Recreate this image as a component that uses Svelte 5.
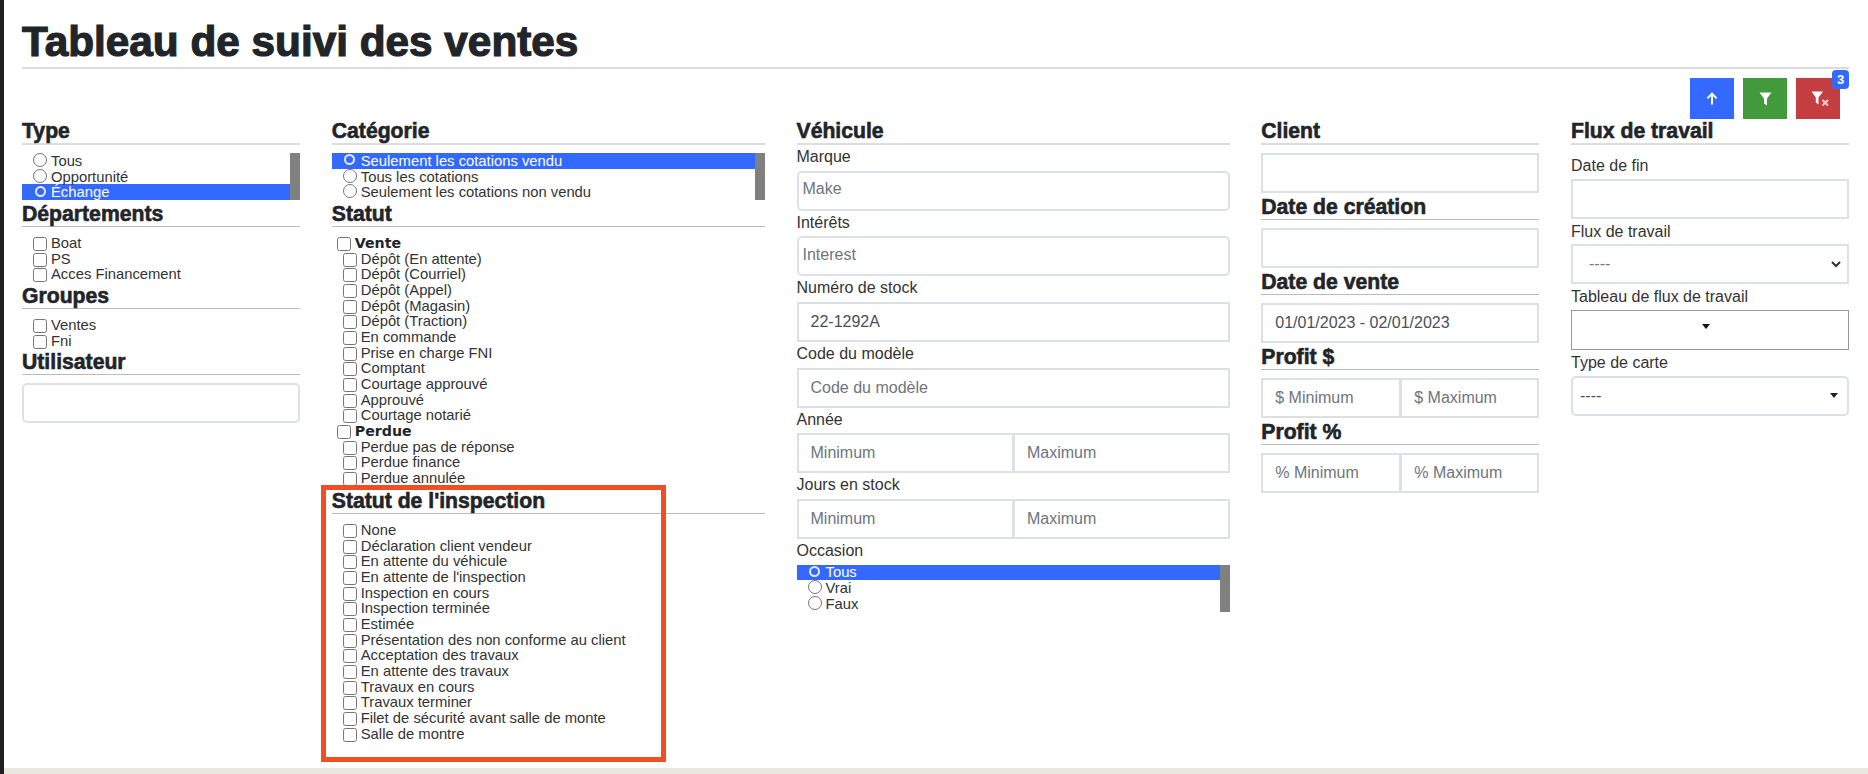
<script>
  const typeOptions = [
    { label: 'Tous' },
    { label: 'Opportunité' },
    { label: 'Échange', selected: true }
  ];
  const categoryOptions = [
    { label: 'Seulement les cotations vendu', selected: true },
    { label: 'Tous les cotations' },
    { label: 'Seulement les cotations non vendu' }
  ];
  const usedOptions = [
    { label: 'Tous', selected: true },
    { label: 'Vrai' },
    { label: 'Faux' }
  ];
  const departments = ['Boat', 'PS', 'Acces Financement'];
  const groups = ['Ventes', 'Fni'];
  const statusGroups = [
    {
      name: 'Vente',
      items: [
        'Dépôt (En attente)',
        'Dépôt (Courriel)',
        'Dépôt (Appel)',
        'Dépôt (Magasin)',
        'Dépôt (Traction)',
        'En commande',
        'Prise en charge FNI',
        'Comptant',
        'Courtage approuvé',
        'Approuvé',
        'Courtage notarié'
      ]
    },
    { name: 'Perdue', items: ['Perdue pas de réponse', 'Perdue finance', 'Perdue annulée'] }
  ];
  const inspection = [
    'None',
    'Déclaration client vendeur',
    'En attente du véhicule',
    "En attente de l'inspection",
    'Inspection en cours',
    'Inspection terminée',
    'Estimée',
    'Présentation des non conforme au client',
    'Acceptation des travaux',
    'En attente des travaux',
    'Travaux en cours',
    'Travaux terminer',
    'Filet de sécurité avant salle de monte',
    'Salle de montre'
  ];
</script>

{#snippet radioList(name, options)}
  <div class="radio-list">
    <div class="options">
      {#each options as opt}
        <label class="option" class:selected={opt.selected}>
          <input type="radio" {name} />
          <span>{opt.label}</span>
        </label>
      {/each}
    </div>
    <div class="thumb"></div>
  </div>
{/snippet}

{#snippet checks(items)}
  <div class="checks">
    {#each items as item}
      <label class="check"><input type="checkbox" /><span>{item}</span></label>
    {/each}
  </div>
{/snippet}

<div class="page">
  <div class="edge"></div>
  <div class="main">
    <main class="content">
      <h1>Tableau de suivi des ventes</h1>

      <div class="actions">
        <button class="btn blue" aria-label="Haut">
          <svg width="12" height="13" viewBox="0 0 12 13"><path d="M6 12.5V2M1.4 6.4 6 1.6l4.6 4.8" fill="none" stroke="#fff" stroke-width="2" /></svg>
        </button>
        <button class="btn green" aria-label="Filtrer">
          <svg width="13" height="14" viewBox="0 0 13 14"><path d="M0.5 0.5h12L8 6.5V13.5L5 11.5V6.5z" fill="#fff" /></svg>
        </button>
        <button class="btn red" aria-label="Effacer">
          <svg width="19" height="15" viewBox="0 0 19 15"><path d="M0.5 0.5h11.5L7.5 6.5V13.5L4.8 11.5V6.5z" fill="#fff" /><path d="M11.5 9l5.5 5.5M17 9l-5.5 5.5" stroke="#f3c9cb" stroke-width="2" /></svg>
          <span class="badge">3</span>
        </button>
      </div>

      <div class="grid">
        <section>
          <h5 class="top">Type</h5>
          {@render radioList('type', typeOptions)}
          <h5>Départements</h5>
          {@render checks(departments)}
          <h5>Groupes</h5>
          {@render checks(groups)}
          <h5>Utilisateur</h5>
          <input class="field round" type="text" />
        </section>

        <section>
          <h5 class="top">Catégorie</h5>
          {@render radioList('category', categoryOptions)}
          <h5>Statut</h5>
          <div class="checks status">
            {#each statusGroups as group}
              <label class="check parent"><input type="checkbox" /><span>{group.name}</span></label>
              {#each group.items as item}
                <label class="check"><input type="checkbox" /><span>{item}</span></label>
              {/each}
            {/each}
          </div>
          <div class="highlight-wrap">
            <h5>Statut de l'inspection</h5>
            {@render checks(inspection)}
            <div class="highlight"></div>
          </div>
        </section>

        <section class="tight">
          <h5 class="top">Véhicule</h5>
          <span class="label">Marque</span>
          <input class="field round small-pad" type="text" placeholder="Make" />
          <span class="label">Intérêts</span>
          <input class="field round small-pad" type="text" placeholder="Interest" />
          <span class="label">Numéro de stock</span>
          <input class="field" type="text" value="22-1292A" />
          <span class="label">Code du modèle</span>
          <input class="field" type="text" placeholder="Code du modèle" />
          <span class="label">Année</span>
          <div class="pair">
            <input class="field" type="text" placeholder="Minimum" />
            <input class="field" type="text" placeholder="Maximum" />
          </div>
          <span class="label">Jours en stock</span>
          <div class="pair">
            <input class="field" type="text" placeholder="Minimum" />
            <input class="field" type="text" placeholder="Maximum" />
          </div>
          <span class="label">Occasion</span>
          {@render radioList('used', usedOptions)}
        </section>

        <section>
          <h5 class="top">Client</h5>
          <input class="field" type="text" />
          <h5>Date de création</h5>
          <input class="field" type="text" />
          <h5>Date de vente</h5>
          <input class="field" type="text" value="01/01/2023 - 02/01/2023" />
          <h5>Profit $</h5>
          <div class="pair">
            <input class="field" type="text" placeholder="$ Minimum" />
            <input class="field" type="text" placeholder="$ Maximum" />
          </div>
          <h5>Profit %</h5>
          <div class="pair">
            <input class="field" type="text" placeholder="% Minimum" />
            <input class="field" type="text" placeholder="% Maximum" />
          </div>
        </section>

        <section class="workflow">
          <h5 class="top">Flux de travail</h5>
          <span class="label">Date de fin</span>
          <input class="field" type="text" />
          <span class="label">Flux de travail</span>
          <div class="field box wf">
            <span class="dashes">----</span>
            <svg width="10" height="7" viewBox="0 0 10 7"><path d="M1 1l4 4 4-4" fill="none" stroke="#333" stroke-width="2" /></svg>
          </div>
          <span class="label">Tableau de flux de travail</span>
          <div class="field box board">
            <svg width="8" height="5" viewBox="0 0 8 5"><path d="M0 0h8L4 5z" fill="#111" /></svg>
          </div>
          <span class="label">Type de carte</span>
          <div class="field box round card">
            <span class="dashes">----</span>
            <svg width="8" height="5" viewBox="0 0 8 5"><path d="M0 0h8L4 5z" fill="#222" /></svg>
          </div>
        </section>
      </div>
    </main>
    <div class="footer"></div>
  </div>
</div>

<style>
  :global(body) {
    margin: 0;
    background: #fff;
    font-family: 'Liberation Sans', Arial, sans-serif;
    color: #333;
  }

  .page {
    display: flex;
    height: 774px;
    overflow: hidden;
  }

  .edge {
    width: 4px;
    flex-shrink: 0;
    background: #1e1e1e;
  }

  .main {
    flex: 1;
    min-width: 0;
    display: flex;
    flex-direction: column;
  }

  .content {
    flex: 1;
    padding: 0 19px 0 18px;
    min-width: 0;
  }

  .footer {
    height: 6px;
    background: #e8e8e0;
  }

  h1 {
    margin: 0;
    height: 67px;
    box-sizing: border-box;
    padding-top: 18px;
    font-size: 42.3px;
    line-height: 48px;
    font-weight: 700;
    color: #212529;
    -webkit-text-stroke: 1.2px #212529;
  }

  .actions {
    display: flex;
    justify-content: flex-end;
    gap: 9px;
    height: 51px;
    box-sizing: border-box;
    padding: 9px 9px 0 0;
    border-top: 2px solid #ddd;
  }

  .btn {
    position: relative;
    width: 44px;
    height: 41px;
    border: 0;
    padding: 0;
    display: flex;
    align-items: center;
    justify-content: center;
  }
  .blue { background: #3369ff; }
  .green { background: #439a3d; }
  .red { background: #c43d41; }
  .red svg { margin-left: 4px; }

  .badge {
    position: absolute;
    top: -8px;
    right: -9px;
    width: 17px;
    height: 19px;
    border-radius: 4px;
    background: #3369ff;
    color: #fff;
    font-size: 13px;
    font-weight: 700;
    line-height: 19px;
    text-align: center;
  }

  .grid {
    display: grid;
    grid-template-columns: 278px 433px 433px 278px 278px;
    column-gap: 31.75px;
  }

  h5 {
    margin: 0 0 8px;
    height: 27px;
    box-sizing: border-box;
    border-bottom: 1px solid #bbb;
    font-size: 21.2px;
    line-height: 28px;
    font-weight: 700;
    color: #212529;
    -webkit-text-stroke: 0.6px #212529;
  }
  h5.top {
    border-bottom: 2px solid #ddd;
    line-height: 26px;
  }
  .tight h5.top { margin-bottom: 0; }

  .radio-list {
    display: flex;
    height: 47px;
    overflow: hidden;
  }
  .options { flex: 1; min-width: 0; }
  .thumb { width: 10px; background: #808080; }

  .option {
    display: flex;
    align-items: center;
    height: 15.7px;
    padding-left: 11px;
    font-size: 14.8px;
    white-space: nowrap;
  }
  .option.selected {
    background: #3369ff;
    color: #fff;
  }
  .option input {
    appearance: none;
    width: 14px;
    height: 14px;
    margin: 0 4px 2px 0;
    border: 1.5px solid #767676;
    border-radius: 50%;
    background: #fff;
  }
  .option.selected input {
    width: 11px;
    height: 11px;
    margin: 0 5.5px 2px 1.5px;
    border: 2px solid #e4ebff;
    background: transparent;
  }

  .check {
    display: flex;
    align-items: center;
    height: 15.7px;
    padding-left: 11px;
    font-size: 14.8px;
    white-space: nowrap;
  }
  .check input {
    width: 14px;
    height: 14px;
    margin: 2px 4px 0 0;
  }
  .check.parent {
    padding-left: 5px;
    font-family: 'DejaVu Sans', sans-serif;
    font-size: 14.2px;
    font-weight: 700;
    color: #212529;
  }
  .status { height: 252px; overflow: hidden; }

  .highlight-wrap { position: relative; }
  .highlight {
    position: absolute;
    left: -11px;
    top: -2px;
    width: 345px;
    height: 277px;
    box-sizing: border-box;
    border: 5px solid #f04e23;
    pointer-events: none;
  }

  .label {
    display: block;
    height: 25.67px;
    font-size: 16px;
    line-height: 24px;
  }
  .workflow .label { line-height: 26px; }

  .field {
    display: block;
    width: 100%;
    height: 40px;
    box-sizing: border-box;
    margin: 0;
    padding: 0 12px;
    border: 2px solid #dde0e4;
    border-radius: 0;
    background: #fff;
    font-family: inherit;
    font-size: 16px;
    color: #495057;
    outline: none;
  }
  .field::placeholder { color: #6c757d; opacity: 1; }
  .round { border-radius: 5px; }
  .small-pad { padding: 0 4px 3px; }

  .pair { display: flex; }
  .pair .field { width: calc(50% + 1px); }
  .pair .field + .field { border-left-width: 1px; width: calc(50% - 1px); }

  .box {
    display: flex;
    align-items: center;
    justify-content: space-between;
  }
  .dashes { font-size: 16px; }
  .wf { padding: 0 6px 0 16px; }
  .wf .dashes { color: #777; }
  .board { justify-content: center; border: 1.5px solid #999; padding: 0 8px 6px 0; }
  .card { padding: 0 9px 0 7px; }
</style>
